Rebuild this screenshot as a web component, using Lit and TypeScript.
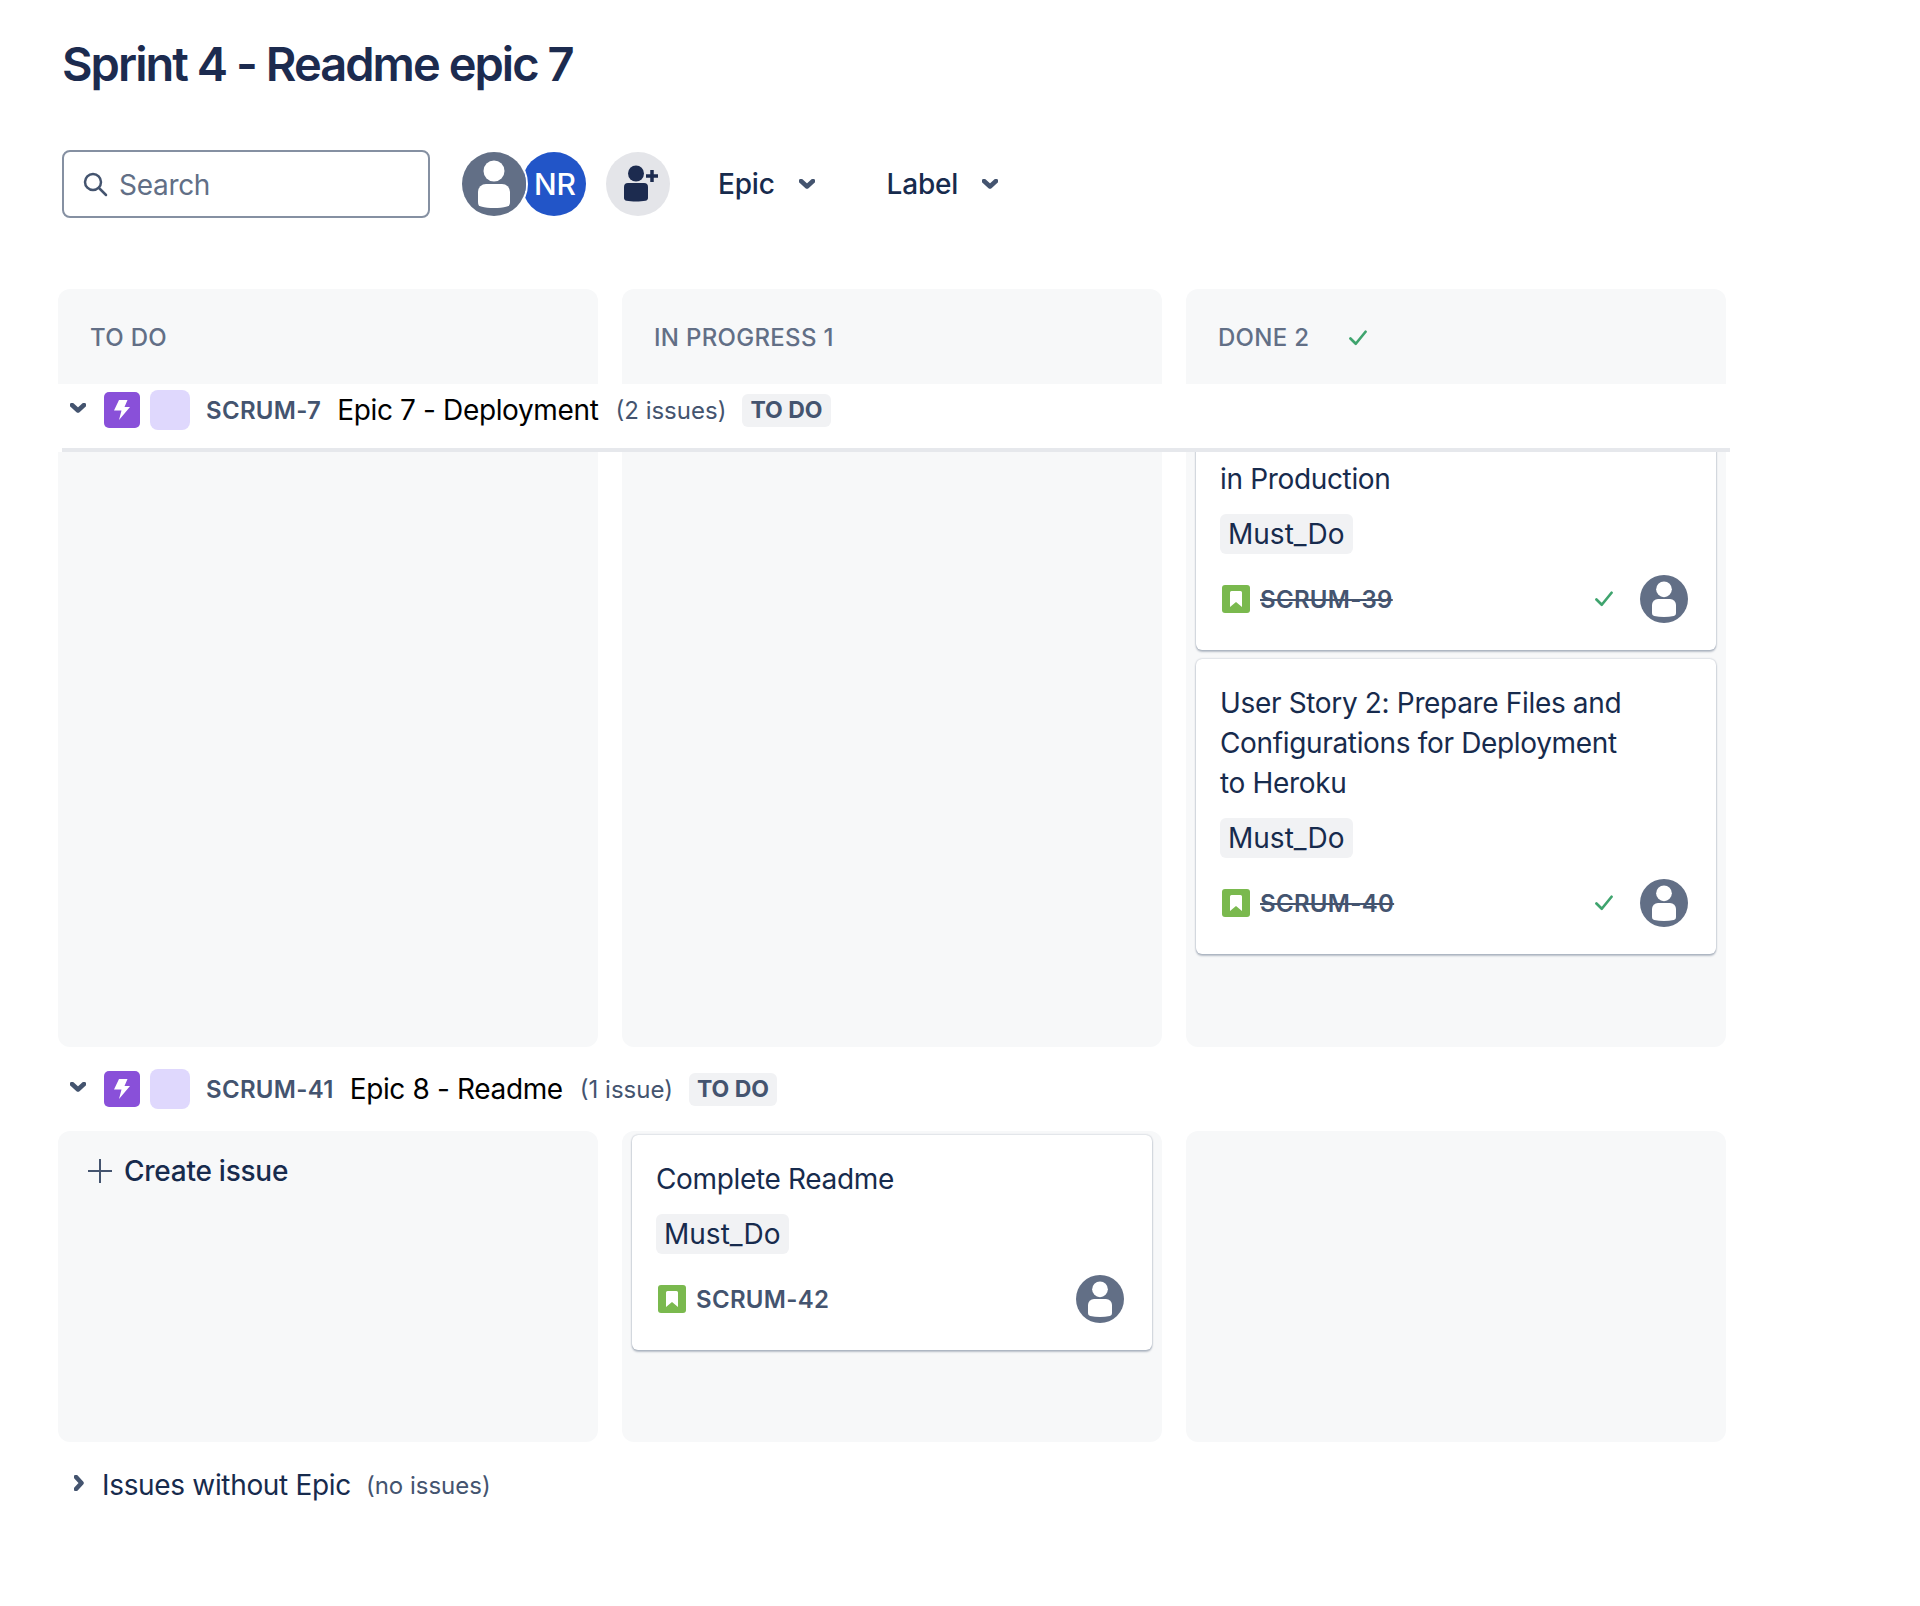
import { LitElement, html, css } from "lit";
import { customElement } from "lit/decorators.js";

const avatar = (size: number) => html`<svg class="av" width=${size} height=${size} viewBox="0 0 64 64">
  <circle cx="32" cy="32" r="32" fill="#626F86"></circle>
  <circle cx="32" cy="19" r="10.5" fill="#fff"></circle>
  <path d="M16 40a8 8 0 0 1 8-8h16a8 8 0 0 1 8 8v10c0 3-1 4-3 4.500-8 2-18 2-26 0-2-.5-3-1.500-3-4.500z" fill="#fff"></path>
</svg>`;

const chevDown = html`<svg class="chev" width="16" height="10" viewBox="0 0 16 10"><path d="M2 2l6 5.500L14 2" fill="none" stroke="#44546F" stroke-width="4.500" stroke-linecap="round" stroke-linejoin="round"></path></svg>`;

const check = html`<svg class="check" width="18" height="16" viewBox="0 0 20 18"><path d="M1.500 9.500L7.500 15.500L18.500 2" fill="none" stroke="#3FA46E" stroke-width="3" stroke-linecap="round" stroke-linejoin="round"></path></svg>`;

const story = html`<svg class="story" width="28" height="28" viewBox="0 0 28 28"><rect width="28" height="28" rx="3" fill="#7AB94E"></rect><path d="M8 7.500A1.500 1.500 0 0 1 9.500 6h9A1.500 1.500 0 0 1 20 7.500V22l-6-5-6 5z" fill="#fff"></path></svg>`;

const epicIcon = html`<svg class="epic" width="36" height="36" viewBox="0 0 36 36"><rect width="36" height="36" rx="5" fill="#8950D9"></rect><path d="M15 8h8.500l-3 7H26L15 28l2.500-9.500H10z" fill="#fff"></path></svg>`;

interface Card { title: string[]; key: string; done: boolean; clipped?: boolean }

@customElement("app-root")
export class AppRoot extends LitElement {
  static styles = css`
    :host { display: block; min-height: 1606px; background: #fff; font-family: Inter, "Liberation Sans", sans-serif; color: #172B4D; padding-left: 58px; box-sizing: border-box; }
    * { box-sizing: border-box; }
    h1 { margin: 0; padding: 36px 0 0 4px; font-size: 47px; line-height: 56px; font-weight: 600; letter-spacing: -1.960px; color: #1C2B4F; }
    .toolbar { display: flex; align-items: center; margin: 58px 0 71px 4px; height: 68px; }
    .search { width: 368px; height: 68px; border: 2px solid #8590A2; border-radius: 8px; display: flex; align-items: center; padding: 2px 0 0 18px; gap: 11px; font-size: 28px; letter-spacing: -.3px; color: #626F86; }
    .search svg { margin-top: -2px; }
    .avatars { display: flex; margin-left: 32px; }
    .avatars .first { position: relative; z-index: 1; width: 68px; height: 68px; margin: -2px -6px -2px -2px; border-radius: 50%; border: 2px solid #fff; display: flex; }
    .nr { width: 64px; height: 64px; border-radius: 50%; background: #2255C8; color: #fff; font-size: 30px; font-weight: 500; display: flex; align-items: center; justify-content: center; padding-left: 2px; }
    .add { width: 64px; height: 64px; border-radius: 50%; background: #E4E5E9; margin-left: 20px; display: flex; }
    .filter { display: flex; align-items: center; gap: 24px; font-size: 28px; font-weight: 500; letter-spacing: -.2px; }
    .filter.f1 { margin-left: 48px; }
    .filter.f2 { margin-left: 72px; }
    .grid { display: grid; grid-template-columns: repeat(3, 540px); gap: 24px; }
    .head { height: 95px; background: #F7F8F9; border-radius: 12px 12px 0 0; padding: 2px 32px 0; display: flex; align-items: center; font-size: 24px; font-weight: 500; color: #626F86; letter-spacing: .3px; }
    .head .check { margin-left: 40px; }
    .swim { display: flex; align-items: center; height: 84px; padding-left: 12px; width: 1672px; }
    .swim > .chev { margin-bottom: 4px; }
    .swim.sticky { position: relative; z-index: 2; height: 68px; background: #fff; padding-bottom: 16px; }
    .swim.sticky::after { content: ""; position: absolute; left: 4px; right: 0; bottom: 0; height: 4px; background: rgba(9,30,66,.1); }
    .swim .epic { margin-left: 18px; }
    .swatch { width: 40px; height: 40px; background: #DFD8FD; border-radius: 8px; margin-left: 10px; }
    .key { margin-left: 16px; font-size: 24px; font-weight: 600; color: #44546F; letter-spacing: .3px; }
    .name { margin-left: 16px; font-size: 28px; color: #000; letter-spacing: -.36px; }
    .count { margin-left: 17px; font-size: 24px; color: #44546F; }
    .loz { margin-left: 16px; height: 33px; padding: 0 8px; background: #F1F2F4; border-radius: 6px; font-size: 23px; font-weight: 700; color: #44546F; display: flex; align-items: center; }
    .col { background: #F7F8F9; border-radius: 0 0 12px 12px; padding: 4px 10px; display: flex; flex-direction: column; gap: 9px; }
    .row1 .col { margin-top: -4px; padding-top: 0; height: 599px; }
    .row2 .col { height: 311px; border-radius: 12px; }
    .card { background: #fff; border-radius: 6px; padding: 24px 28px 27px 24px; box-shadow: 0 2px 2px rgba(9,30,66,.25), 0 0 2px rgba(9,30,66,.31); }
    .card.clipped { padding-top: 11px; border-radius: 0 0 6px 6px; }
    .title { font-size: 28px; line-height: 40px; letter-spacing: -.34px; }
    .label { display: inline-block; height: 40px; line-height: 40px; margin-top: 15px; padding: 0 8px; background: #F1F2F4; border-radius: 6px; font-size: 28px; }
    .foot { display: flex; align-items: center; margin-top: 21px; height: 48px; padding-left: 2px; }
    .foot .fkey { margin-left: 10px; font-size: 24px; font-weight: 600; color: #44546F; letter-spacing: .3px; flex: 1; }
    .foot .fkey.done { text-decoration: line-through; }
    .foot .check { margin-right: 27px; }
    .create { display: flex; align-items: center; gap: 12px; padding: 16px 0 0 20px; font-size: 28px; font-weight: 500; line-height: 40px; letter-spacing: -.25px; }
    .none { display: flex; align-items: center; height: 86px; padding-left: 16px; }
    .none svg { margin-bottom: 4px; }
    .none .lbl { margin-left: 18px; font-size: 28px; letter-spacing: -.33px; }
    .none .count { margin-left: 15px; }
  `;

  private card(c: Card) {
    return html`<div class="card ${c.clipped ? "clipped" : ""}">
      <div class="title">${c.title.map((t) => html`<div>${t}</div>`)}</div>
      <span class="label">Must_Do</span>
      <div class="foot">
        ${story}
        <span class="fkey ${c.done ? "done" : ""}">${c.key}</span>
        ${c.done ? check : ""}
        ${avatar(48)}
      </div>
    </div>`;
  }

  private swim(key: string, name: string, count: string, sticky = false) {
    return html`<div class="swim ${sticky ? "sticky" : ""}">
      ${chevDown}${epicIcon}<span class="swatch"></span>
      <span class="key">${key}</span><span class="name">${name}</span>
      <span class="count">${count}</span><span class="loz">TO DO</span>
    </div>`;
  }

  render() {
    return html`
      <h1>Sprint 4 - Readme epic 7</h1>
      <div class="toolbar">
        <div class="search">
          <svg width="26" height="26" viewBox="0 0 26 26"><circle cx="11" cy="11" r="8" fill="none" stroke="#44546F" stroke-width="2.500"></circle><path d="M17 17l7 7" stroke="#44546F" stroke-width="2.500" stroke-linecap="round"></path></svg>
          <span>Search</span>
        </div>
        <div class="avatars">
          <span class="first">${avatar(64)}</span>
          <span class="nr">NR</span>
        </div>
        <span class="add"><svg width="64" height="64" viewBox="0 0 64 64"><circle cx="30" cy="21.500" r="8" fill="#1C2B4F"></circle><path d="M18 35a4 4 0 0 1 4-4h16a4 4 0 0 1 4 4v11c0 1.500-1 2.500-2.500 2.800-5 1-14 1-19 0-1.500-.3-2.500-1.300-2.500-2.800z" fill="#1C2B4F"></path><path d="M40 24h12M46 18v12" stroke="#1C2B4F" stroke-width="3.500"></path></svg></span>
        <span class="filter f1">Epic ${chevDown}</span>
        <span class="filter f2">Label ${chevDown}</span>
      </div>
      <div class="grid">
        <div class="head">TO DO</div>
        <div class="head">IN PROGRESS 1</div>
        <div class="head">DONE 2 ${check}</div>
      </div>
      ${this.swim("SCRUM-7", "Epic 7 - Deployment", "(2 issues)", true)}
      <div class="grid row1">
        <div class="col"></div>
        <div class="col"></div>
        <div class="col">
          ${this.card({ title: ["in Production"], key: "SCRUM-39", done: true, clipped: true })}
          ${this.card({ title: ["User Story 2: Prepare Files and", "Configurations for Deployment", "to Heroku"], key: "SCRUM-40", done: true })}
        </div>
      </div>
      ${this.swim("SCRUM-41", "Epic 8 - Readme", "(1 issue)")}
      <div class="grid row2">
        <div class="col"><div class="create"><svg width="24" height="24" viewBox="0 0 24 24"><path d="M12 0v24M0 12h24" stroke="#44546F" stroke-width="2"></path></svg>Create issue</div></div>
        <div class="col">${this.card({ title: ["Complete Readme"], key: "SCRUM-42", done: false })}</div>
        <div class="col"></div>
      </div>
      <div class="none">
        <svg width="10" height="16" viewBox="0 0 10 16"><path d="M2 2l5.500 6L2 14" fill="none" stroke="#44546F" stroke-width="4.500" stroke-linecap="round" stroke-linejoin="round"></path></svg>
        <span class="lbl">Issues without Epic</span><span class="count">(no issues)</span>
      </div>
    `;
  }
}
